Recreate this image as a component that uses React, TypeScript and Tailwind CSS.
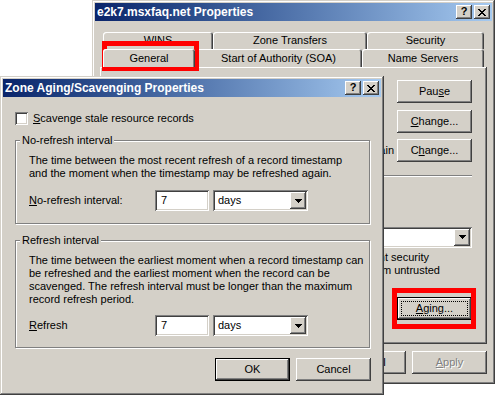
import type { ReactNode } from "react";

const raised =
  "shadow-[inset_-1px_-1px_#404040,inset_1px_1px_#ffffff,inset_-2px_-2px_#808080]";
const frame =
  "shadow-[inset_-1px_-1px_#404040,inset_1px_1px_#d4d0c8,inset_-2px_-2px_#808080,inset_2px_2px_#ffffff]";
const sunken =
  "shadow-[inset_1px_1px_#808080,inset_-1px_-1px_#ffffff,inset_2px_2px_#404040,inset_-2px_-2px_#d4d0c8]";

function CapButton({ children }: { children: ReactNode }) {
  return (
    <div className={`w-[16px] h-[14px] bg-[#d4d0c8] ${raised} flex items-center justify-center`}>
      {children}
    </div>
  );
}

function TitleBar({ title }: { title: string }) {
  return (
    <div className="h-[18px] flex items-center justify-between bg-linear-to-r from-[#0a246a] to-[#a6caf0] pl-[2px] pr-[2px]">
      <span className="text-white font-bold text-[12px] leading-[18px]">{title}</span>
      <div className="flex gap-[2px]">
        <CapButton>
          <span className="font-bold text-[11px] leading-none text-black -mt-[1px]">?</span>
        </CapButton>
        <CapButton>
          <svg width="8" height="7" viewBox="0 0 8 7" shapeRendering="crispEdges">
            <path
              d="M0 0h2v1h1v1h2v-1h1v-1h2v1h-1v1h-1v1h-1v1h1v1h1v1h1v1h-2v-1h-1v-1h-2v1h-1v1h-2v-1h1v-1h1v-1h1v-1h-1v-1h-1v-1h-1z"
              fill="#000"
            />
          </svg>
        </CapButton>
      </div>
    </div>
  );
}

function Button({
  children,
  def,
  focus,
  disabled,
}: {
  children?: ReactNode;
  def?: boolean;
  focus?: boolean;
  disabled?: boolean;
}) {
  return (
    <div
      className={`relative w-[75px] h-[23px] shrink-0 bg-[#d4d0c8] ${raised} flex items-center justify-center ${
        def ? "border border-black" : ""
      } ${disabled ? "text-[#808080] [text-shadow:1px_1px_0_#ffffff]" : ""}`}
    >
      <span>{children}</span>
      {focus && <span className="absolute inset-[3px] border border-dotted border-black" />}
    </div>
  );
}

function Edit({ value }: { value: string }) {
  return (
    <div className={`w-[54px] h-[21px] bg-white ${sunken} flex items-center pl-[6px]`}>{value}</div>
  );
}

function Combo({ value, className }: { value: string; className: string }) {
  return (
    <div className={`h-[21px] bg-white ${sunken} flex items-center p-[2px] ${className}`}>
      <span className="flex-1 pl-[3px]">{value}</span>
      <div className={`w-[16px] h-full bg-[#d4d0c8] ${raised} flex items-center justify-center`}>
        <svg width="7" height="4" viewBox="0 0 7 4" shapeRendering="crispEdges">
          <path d="M0 0h7v1h-1v1h-1v1h-1v1h-1v-1h-1v-1h-1v-1h-1z" fill="#000" />
        </svg>
      </div>
    </div>
  );
}

function Group({ label, className, children }: { label: string; className: string; children: ReactNode }) {
  return (
    <div className={`relative w-[355px] border border-[#808080] shadow-[inset_1px_1px_#ffffff,1px_1px_#ffffff] ${className}`}>
      <span className="absolute left-[4px] -top-[7px] bg-[#d4d0c8] px-[2px] leading-[13px]">{label}</span>
      {children}
    </div>
  );
}

function Tab({ label, w, selected }: { label: string; w: string; selected?: boolean }) {
  return (
    <div
      className={`${w} h-full rounded-t-[3px] bg-[#d4d0c8] shadow-[inset_1px_1px_#ffffff,inset_-1px_0_#404040,inset_-2px_0_#808080] flex items-center justify-center ${
        selected ? "relative z-10" : ""
      }`}
    >
      {label}
    </div>
  );
}

function MainWindow() {
  return (
    <div className={`absolute left-[92px] top-0 w-[403px] h-[384px] bg-[#d4d0c8] p-[3px] ${frame}`}>
      <TitleBar title="e2k7.msxfaq.net Properties" />
      <div className="ml-[5px] mt-[11px] w-[387px]">
        <div className="flex h-[17px] pl-[3px]">
          <Tab label="WINS" w="w-[110px]" />
          <Tab label="Zone Transfers" w="w-[154px]" />
          <Tab label="Security" w="w-[117px]" />
        </div>
        <div className="flex h-[18px] pl-[3px]">
          <Tab label="General" w="w-[92px]" selected />
          <Tab label="Start of Authority (SOA)" w="w-[167px]" />
          <Tab label="Name Servers" w="w-[122px]" />
        </div>
        <div className={`h-[277px] ${raised} pl-[12px] pr-[15px] pt-[13px] flex flex-col overflow-hidden`}>
          <div className="flex items-center justify-end">
            <Button>
              Pau<span className="underline">s</span>e
            </Button>
          </div>
          <div className="flex items-center justify-end mt-[7px]">
            <Button>
              <span className="underline">C</span>hange...
            </Button>
          </div>
          <div className="flex items-center justify-end gap-[3px] mt-[6px]">
            <span className="whitespace-nowrap">Active Directory domain</span>
            <Button>
              C<span className="underline">h</span>ange...
            </Button>
          </div>
          <div className="mt-[13px] h-[2px] border-t border-[#808080] border-b border-b-white" />
          <div className="h-[50px]" />
          <div className="flex items-center justify-end h-[20px]">
            <Combo value="" className="w-[200px] h-[20px]" />
          </div>
          <div className="mt-[4px] flex flex-col items-end leading-[13px] whitespace-nowrap">
            <span className="mr-[43px]">a significant security</span>
            <span className="mr-[32px]">be accepted from untrusted</span>
          </div>
          <div className="flex items-center justify-end mt-[20px]">
            <Button def focus>
              <span className="underline">A</span>ging...
            </Button>
          </div>
        </div>
        <div className="flex justify-end gap-[6px] mt-[7px]">
          <Button />
          <Button>Cancel</Button>
          <Button disabled>
            <span className="underline">A</span>pply
          </Button>
        </div>
      </div>
    </div>
  );
}

function AgingDialog() {
  return (
    <div className={`absolute left-0 top-[76px] w-[384px] h-[319px] bg-[#d4d0c8] p-[3px] ${frame}`}>
      <TitleBar title="Zone Aging/Scavenging Properties" />
      <div className="pl-[12px]">
        <div className="mt-[15px] h-[13px] flex items-center gap-[5px]">
          <div className={`w-[13px] h-[13px] bg-white ${sunken}`} />
          <span>
            <span className="underline">S</span>cavenge stale resource records
          </span>
        </div>
        <Group label="No-refresh interval" className="mt-[15px] h-[84px] pl-[13px] pt-[13px]">
          <div className="leading-[13px]">
            The time between the most recent refresh of a record timestamp
            <br />
            and the moment when the timestamp may be refreshed again.
          </div>
          <div className="flex items-center mt-[10px]">
            <span className="w-[126px]">
              <span className="underline">N</span>o-refresh interval:
            </span>
            <Edit value="7" />
            <Combo value="days" className="w-[95px] ml-[4px]" />
          </div>
        </Group>
        <Group label="Refresh interval" className="mt-[16px] h-[108px] pl-[13px] pt-[13px]">
          <div className="leading-[13px]">
            The time between the earliest moment when a record timestamp can
            <br />
            be refreshed and the earliest moment when the record can be
            <br />
            scavenged. The refresh interval must be longer than the maximum
            <br />
            record refresh period.
          </div>
          <div className="flex items-center mt-[9px]">
            <span className="w-[126px]">
              <span className="underline">R</span>efresh
            </span>
            <Edit value="7" />
            <Combo value="days" className="w-[95px] ml-[4px]" />
          </div>
        </Group>
        <div className="flex justify-end gap-[6px] mt-[10px] pr-[10px]">
          <Button def>OK</Button>
          <Button>Cancel</Button>
        </div>
      </div>
    </div>
  );
}

export default function App() {
  return (
    <div className="relative w-[496px] h-[395px] overflow-hidden bg-white text-black text-[11px] leading-[13px] font-['Liberation_Sans',Arial,sans-serif]">
      <MainWindow />
      <div className="absolute left-[102px] top-[41px] w-[97px] h-[30px] border-[5px] border-[#ff0000]" />
      <div className="absolute left-[392px] top-[288px] w-[84px] h-[41px] border-[5px] border-[#ff0000]" />
      <AgingDialog />
    </div>
  );
}
